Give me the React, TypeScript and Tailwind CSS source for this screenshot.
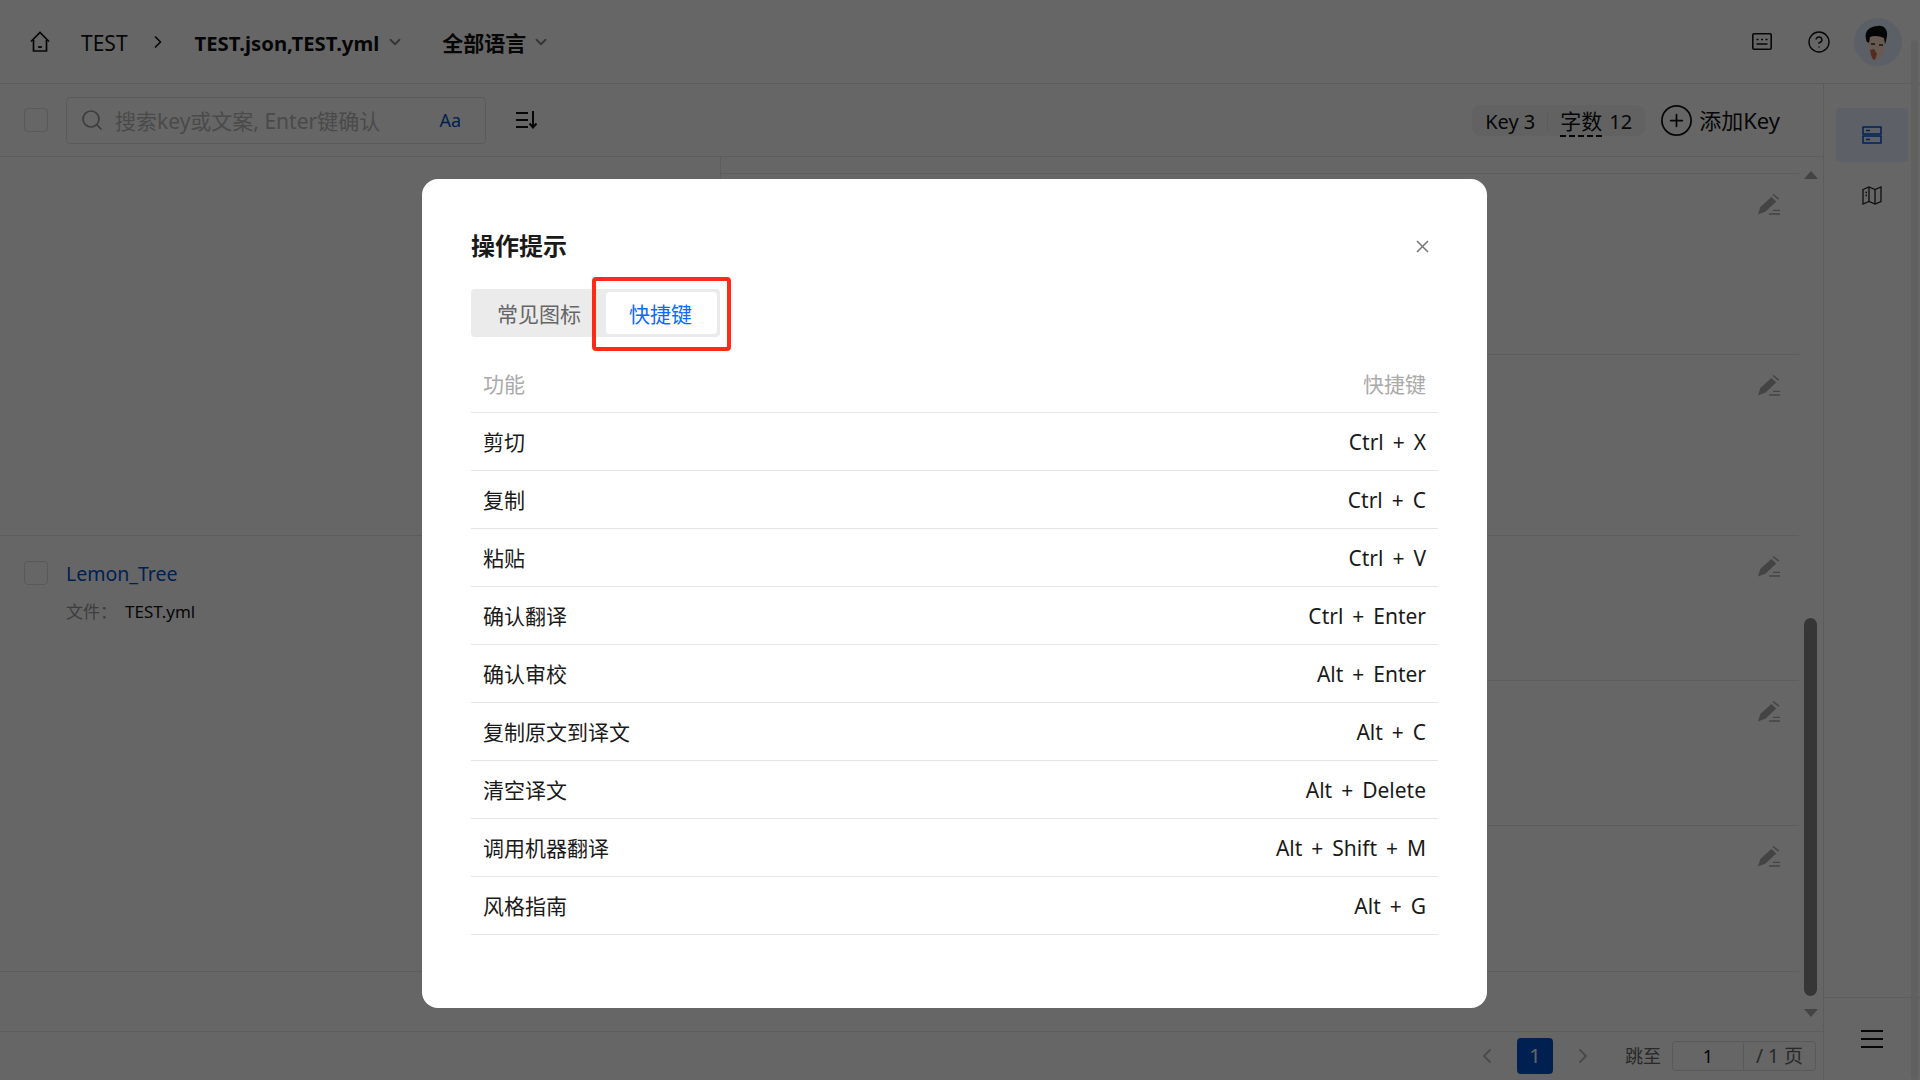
import React from 'react';
import { ChevronDown, ChevronLeft, ChevronRight, CircleHelp, CirclePlus, Search } from 'lucide-react';

const shortcuts = [
  ['剪切', 'Ctrl + X'],
  ['复制', 'Ctrl + C'],
  ['粘贴', 'Ctrl + V'],
  ['确认翻译', 'Ctrl + Enter'],
  ['确认审校', 'Alt + Enter'],
  ['复制原文到译文', 'Alt + C'],
  ['清空译文', 'Alt + Delete'],
  ['调用机器翻译', 'Alt + Shift + M'],
  ['风格指南', 'Alt + G'],
];

const HomeIcon = () => (
  <svg width="20" height="22" viewBox="0 0 20 22" fill="none" stroke="#111" strokeWidth="1.7">
    <path d="M1 10.5 10 1.5l9 9" />
    <path d="M3.5 9v11h13V9" />
    <path d="M8 16h4" />
  </svg>
);

const SortIcon = () => (
  <svg width="22" height="18" viewBox="0 0 22 18" fill="none" stroke="#111" strokeWidth="2">
    <path d="M0 2h12M0 9h12M0 16h12" />
    <path d="M17 0v16M13.5 12.5 17 16.5l3.5-4" />
  </svg>
);

const KeyboardIcon = () => (
  <svg width="20" height="17" viewBox="0 0 20 17" fill="none" stroke="#111" strokeWidth="1.6">
    <rect x="0.8" y="0.8" width="18.4" height="15.4" rx="1.2" />
    <path d="M4.5 6.5h2M9 6.5h2M13.5 6.5h2M4.5 11h11" />
  </svg>
);

const EditIcon = () => (
  <svg width="22" height="21" viewBox="0 0 22 21" fill="none" className="block">
    <path d="M0 20.5 2.3 13 13.3 3l5 4.5L7.7 17.5z" fill="#aaa" />
    <path d="M15 .5l5.7 4.7" stroke="#aaa" strokeWidth="1.5" />
    <path d="M15 16.3h7M11 20h11" stroke="#aaa" strokeWidth="1.3" />
  </svg>
);

const ServerIcon = () => (
  <svg width="20" height="18" viewBox="0 0 20 18" fill="none" stroke="#0052cc" strokeWidth="1.5">
    <rect x="1" y="1" width="18" height="7" />
    <rect x="1" y="10" width="18" height="7" />
    <path d="M4 4.5h4M4 13.5h4" />
  </svg>
);

const MapIcon = () => (
  <svg width="20" height="19" viewBox="0 0 20 19" fill="none" stroke="#222" strokeWidth="1.3">
    <path d="M1 3.5 7 1l6 2.5L19 1v14.5L13 18l-6-2.5L1 18z" />
    <path d="M7 1v14.5M13 3.5V18" />
    <path d="M3.5 6.5h1.5M3.5 9.5h1.5" />
  </svg>
);

const Avatar = () => (
  <svg width="48" height="48" viewBox="0 0 48 48">
    <circle cx="24" cy="24" r="24" fill="#e4eeff" />
    <path d="M14 18c5-2 13-2 18 1 0 9-2 15-5 20-3 4-7 4-9 0-3-6-5-13-4-21z" fill="#ffe0cc" />
    <path d="M16 32c1 5 2 10 5 10l2-6-3-5z" fill="#c87050" />
    <path d="M12 21C10 13 16 8 24 8c6-1 10 4 9 10-1 4-1 6-2 8l-1-6c-4-2-10-3-14-1l-1 6c-2-1-3-2-3-4z" fill="#101010" />
    <path d="M17 26h4M25 27h4" stroke="#333" strokeWidth="1.5" />
  </svg>
);

const Checkbox = () => <div className="h-6 w-6 shrink-0 rounded border border-[#dedede] bg-white" />;

const EditRow = ({ height, last }: { height: string; last?: boolean }) => (
  <div className={`${height} flex justify-end border-[#e6e6e6] pr-[19px] pt-5 ${last ? '' : 'border-b'}`}>
    <EditIcon />
  </div>
);

export default function App() {
  return (
    <div className="relative flex h-screen w-full flex-col overflow-hidden bg-white font-['Noto_Sans','Noto_Sans_CJK_SC',sans-serif] text-[#111]">
      <header className="flex h-[84px] shrink-0 items-center border-b border-[#e6e6e6] pl-[30px]">
        <HomeIcon />
        <span className="ml-[31px] mt-[5px] text-[21px]">TEST</span>
        <ChevronRight className="ml-[20px] h-[20px] w-[20px]" strokeWidth={2} />
        <span className="ml-[27px] mt-[3px] text-[20.3px] font-bold">TEST.json,TEST.yml</span>
        <ChevronDown className="ml-[7px] h-[18px] w-[18px] text-[#888]" strokeWidth={2.5} />
        <span className="ml-[38px] mt-[5px] text-[21px] font-bold">全部语言</span>
        <ChevronDown className="ml-[6px] h-[18px] w-[18px] text-[#888]" strokeWidth={2.5} />
        <div className="ml-auto flex items-center">
          <KeyboardIcon />
          <CircleHelp className="ml-[35px] h-[24px] w-[24px]" strokeWidth={1.4} />
          <div className="ml-[23px] mr-[18px]">
            <Avatar />
          </div>
        </div>
      </header>

      <div className="flex min-h-0 flex-1">
        <div className="flex min-w-0 flex-1 flex-col">
          <div className="flex h-[73px] shrink-0 items-center border-b border-[#e6e6e6] pl-6 pr-[43px]">
            <Checkbox />
            <div className="ml-[18px] flex h-[47px] w-[420px] items-center rounded border border-[#e4e4e4] pl-[13px] pr-[24px]">
              <Search className="h-[24px] w-[24px] text-[#999]" strokeWidth={1.7} />
              <span className="ml-[11px] mt-[3px] text-[21px] text-[#b9b9b9]">搜索key或文案, Enter键确认</span>
              <span className="ml-auto text-[18px] text-[#0052cc]">Aa</span>
            </div>
            <div className="ml-[30px]">
              <SortIcon />
            </div>
            <div className="ml-auto flex h-[31px] items-center rounded-lg bg-[#f5f5f5] px-[13px] pt-[3px] text-[20px]">
              <span>Key 3</span>
              <span className="mx-[12px] h-[18px] w-px bg-[#e6e6e6]" />
              <span className="border-b-2 border-dashed border-[#111] text-[21px] leading-[28px]">字数</span>
              <span className="ml-[7px]">12</span>
            </div>
            <CirclePlus className="ml-[14px] h-[35px] w-[35px]" strokeWidth={1.2} />
            <span className="ml-[5px] mt-[1px] text-[22px]">添加Key</span>
          </div>

          <div className="flex min-h-0 flex-1">
            <div className="flex min-w-0 flex-1 flex-col">
              <div className="flex h-[379px] shrink-0 border-b border-[#e6e6e6]">
                <div className="w-[720px] shrink-0" />
                <div className="flex-1 border-l border-[#e6e6e6]">
                  <div className="h-[17px] border-b border-[#e6e6e6]" />
                  <EditRow height="h-[181px]" />
                  <EditRow height="h-[180px]" last />
                </div>
              </div>
              <div className="flex h-[436px] shrink-0 border-b border-[#e6e6e6]">
                <div className="flex w-[720px] shrink-0 gap-[18px] pl-6 pt-[25px]">
                  <Checkbox />
                  <div>
                    <div className="text-[19.5px] leading-[26px] text-[#0052cc]">Lemon_Tree</div>
                    <div className="mt-[12px] flex text-[17px] leading-[26px]">
                      <span className="w-[59px] text-[#999]">文件：</span>
                      <span>TEST.yml</span>
                    </div>
                  </div>
                </div>
                <div className="flex-1 border-l border-[#e6e6e6]">
                  <EditRow height="h-[145px]" />
                  <EditRow height="h-[145px]" />
                  <EditRow height="h-[145px]" last />
                </div>
              </div>
            </div>
            <div className="flex w-6 shrink-0 flex-col items-center pb-[14px] pr-px pt-[14px]">
              <div className="h-0 w-0 border-x-[7.5px] border-b-[8px] border-x-transparent border-b-[#aaa]" />
              <div className="mt-auto h-[378px] w-[13px] rounded-full bg-[#878787]" />
              <div className="mt-[13px] h-0 w-0 border-x-[7.5px] border-t-[8px] border-x-transparent border-t-[#aaa]" />
            </div>
          </div>

          <footer className="flex h-[49px] shrink-0 items-center border-t border-[#e6e6e6] pr-[7px]">
            <div className="ml-auto flex items-center">
              <ChevronLeft className="h-[24px] w-[24px] text-[#bbb]" strokeWidth={2} />
              <div className="ml-[18px] flex h-9 w-9 items-center justify-center rounded bg-[#0052cc] text-[20px] text-white">1</div>
              <ChevronRight className="ml-[18px] h-[24px] w-[24px] text-[#bbb]" strokeWidth={2} />
              <span className="ml-[30px] text-[18px] text-[#666]">跳至</span>
              <div className="ml-[11px] flex h-[30px] items-center rounded border border-[#dedede] text-[18px]">
                <span className="flex w-[71px] justify-center border-r border-[#dedede]">1</span>
                <span className="flex w-[71px] justify-center text-[19px] text-[#666]">/ 1 页</span>
              </div>
            </div>
          </footer>
        </div>

        <aside className="flex w-[97px] shrink-0 flex-col border-l border-[#e6e6e6]">
          <div className="flex-1 px-3 pt-6">
            <div className="flex h-[54px] items-center justify-center rounded-sm bg-[#e9f0ff]">
              <ServerIcon />
            </div>
            <div className="mt-[6px] flex h-[54px] items-center justify-center">
              <MapIcon />
            </div>
          </div>
          <div className="flex h-[83px] shrink-0 items-center justify-center border-t border-[#e6e6e6]">
            <div className="flex w-[22px] flex-col gap-[6px]">
              <div className="h-[2px] bg-[#111]" />
              <div className="h-[2px] bg-[#111]" />
              <div className="h-[2px] bg-[#111]" />
            </div>
          </div>
        </aside>
      </div>

      <div className="absolute bottom-0 right-[2px] top-[40px] w-[7px] rounded-full bg-[#f0f0f0]" />

      <div className="absolute inset-0 bg-black/60 pl-[422px] pt-[179px]">
        <div className="relative h-[829px] w-[1065px] rounded-2xl bg-white px-[49px] pt-[51px]">
          <div className="flex items-center justify-between pr-[9px]">
            <h2 className="text-[24px] font-bold leading-8 text-[#1a1a1a]">操作提示</h2>
            <svg width="13" height="13" viewBox="0 0 13 13" stroke="#777" strokeWidth="1.6">
              <path d="M1 1l11 11M12 1 1 12" />
            </svg>
          </div>

          <div className="mt-[27px] flex h-12 w-[249px] rounded bg-[#ebebeb] p-[3px] text-[21px]">
            <div className="flex w-[132px] items-center justify-center pr-[2px] pt-[3px] text-[#666]">常见图标</div>
            <div className="flex w-[111px] items-center justify-center rounded-sm bg-white pr-[2px] pt-[3px] text-[#0a6cff]">快捷键</div>
          </div>

          <div className="mt-[18px] text-[21px]">
            <div className="flex h-[58px] items-center justify-between border-b border-[#e5e5e5] px-3 pt-[3px] text-[#aaa]">
              <span>功能</span>
              <span>快捷键</span>
            </div>
            {shortcuts.map(([name, keys]) => (
              <div key={name} className="flex h-[58px] items-center justify-between border-b border-[#e5e5e5] px-3 pt-[3px] text-[#1a1a1a]">
                <span>{name}</span>
                <span className="[word-spacing:3.5px]">{keys}</span>
              </div>
            ))}
          </div>

          <div className="absolute left-[170px] top-[98px] h-[74px] w-[139px] rounded-[4px] border-[4.5px] border-[#ff2a1a]" />
        </div>
      </div>
    </div>
  );
}
